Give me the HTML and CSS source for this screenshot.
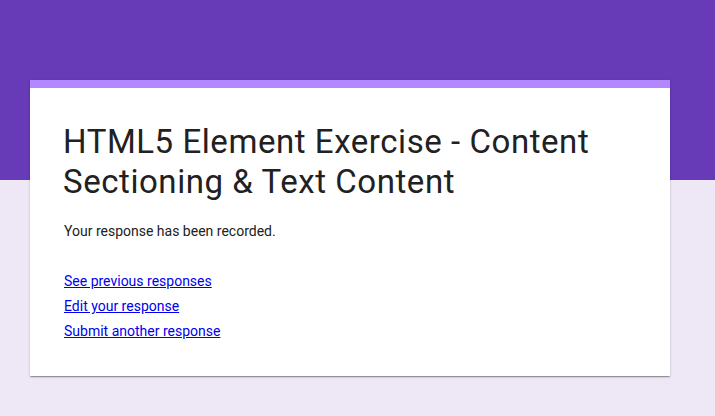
FILE: index.html
```html
<!DOCTYPE html>
<html>
<head>
<meta charset="utf-8">
<link rel="stylesheet" href="styles.css">
</head>
<body>
<div class="page">
  <div class="banner"></div>
  <div class="card">
    <div class="card-top"></div>
    <div class="card-body">
      <h1 class="title">HTML5 Element Exercise - Content Sectioning &amp; Text Content</h1>
      <p class="message">Your response has been recorded.</p>
      <div class="links">
        <a href="#" class="link">See previous responses</a>
        <a href="#" class="link">Edit your response</a>
        <a href="#" class="link">Submit another response</a>
      </div>
    </div>
  </div>
</div>
</body>
</html>
```

FILE: styles.css
```css
html, body {
  margin: 0;
  padding: 0;
}
body {
  background: #ede7f6;
  font-family: Roboto, "Liberation Sans", Arial, sans-serif;
  color: #212121;
  width: 715px;
  height: 416px;
  overflow: hidden;
}
.page {
  position: relative;
  padding-top: 80px;
}
.banner {
  position: absolute;
  left: 0;
  top: 0;
  width: 100%;
  height: 180px;
  background: #673ab7;
}
.card {
  position: relative;
  margin-left: 30px;
  width: 640px;
  background: #fff;
  box-shadow: 0 2px 1px -1px rgba(0,0,0,.2), 0 1px 1px 0 rgba(0,0,0,.14), 0 1px 3px 0 rgba(0,0,0,.12);
}
.card-top {
  height: 8px;
  background: #b388ff;
}
.card-body {
  padding: 34px 34px 32px 33px;
}
.title {
  margin: 0;
  font-size: 33px;
  line-height: 40px;
  font-weight: 400;
  letter-spacing: 0.56px;
  color: #212121;
}
.message {
  margin: 19px 0 0 1px;
  font-size: 14px;
  line-height: 20px;
  color: #212121;
}
.links {
  margin-top: 28px;
  margin-left: 1px;
  display: flex;
  flex-direction: column;
  align-items: flex-start;
}
.link {
  font-size: 14px;
  line-height: 25px;
  color: #0000ee;
  text-decoration: underline;
}
```
